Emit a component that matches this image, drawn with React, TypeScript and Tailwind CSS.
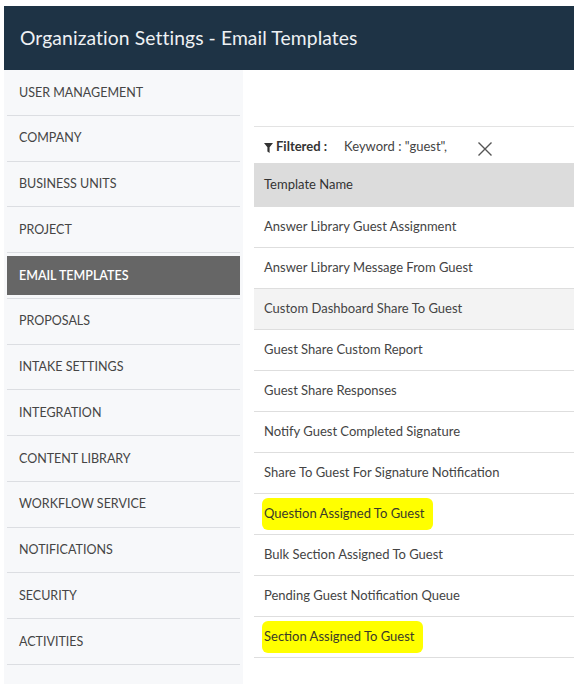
import React from 'react';

const menu = [
  'USER MANAGEMENT',
  'COMPANY',
  'BUSINESS UNITS',
  'PROJECT',
  'EMAIL TEMPLATES',
  'PROPOSALS',
  'INTAKE SETTINGS',
  'INTEGRATION',
  'CONTENT LIBRARY',
  'WORKFLOW SERVICE',
  'NOTIFICATIONS',
  'SECURITY',
  'ACTIVITIES',
];

const rows = [
  { name: 'Answer Library Guest Assignment' },
  { name: 'Answer Library Message From Guest' },
  { name: 'Custom Dashboard Share To Guest', hover: true },
  { name: 'Guest Share Custom Report' },
  { name: 'Guest Share Responses' },
  { name: 'Notify Guest Completed Signature' },
  { name: 'Share To Guest For Signature Notification' },
  { name: 'Question Assigned To Guest', marked: true },
  { name: 'Bulk Section Assigned To Guest' },
  { name: 'Pending Guest Notification Queue' },
  { name: 'Section Assigned To Guest', marked: true },
];

export default function App() {
  return (
    <div className="min-h-[684px] bg-white pt-[6px] pl-[4px] font-['Lato','Liberation_Sans',sans-serif] text-[#444]">
      {/* header */}
      <div className="h-[64px] bg-[#1e3345] flex items-center pl-[16px]">
        <h1 className="text-[19.3px] text-[#eef1f4] tracking-[0.1px]">Organization Settings - Email Templates</h1>
      </div>

      <div className="flex">
        {/* side menu */}
        <div className="w-[239px] h-[614px] bg-[#f7f8fa] px-[3px]">
          {menu.map((m) => (
            <div key={m} className="h-[45.75px] border-b border-[#dcdee2] py-[3px]">
              <div
                className={
                  'h-full flex items-center pl-[12px] pt-[1px] text-[12.5px] ' +
                  (m === 'EMAIL TEMPLATES' ? 'bg-[#666666] text-white font-semibold' : 'text-[#454545]')
                }
              >
                {m}
              </div>
            </div>
          ))}
        </div>

        {/* content */}
        <div className="flex-1 pl-[11px]">
          <div className="h-[57px] border-b border-[#e3e3e3]" />
          <div className="h-[36px] flex items-center pl-[10px] pt-[4px] text-[13px]">
            <svg width="9" height="10" viewBox="0 0 9 10" className="mr-[3px] mt-[1px]">
              <path d="M0 0h9L5.6 4.2V10L3.4 8.6V4.2z" fill="#333" />
            </svg>
            <span className="font-bold text-[#333]">Filtered :</span>
            <span className="ml-[17px] text-[#444]">Keyword : "guest",</span>
            <svg width="16" height="16" viewBox="0 0 16 16" className="ml-[30px] mt-[3px]">
              <path d="M1.5 1.5l13 13M14.5 1.5l-13 13" stroke="#555" strokeWidth="1.4" />
            </svg>
          </div>
          <div className="h-[44px] bg-[#dcdcdc] flex items-center pl-[10px] text-[13px] text-[#333]">Template Name</div>
          {rows.map((r) => (
            <div
              key={r.name}
              className={'h-[41px] border-b border-[#dedede] flex items-center pl-[10px] text-[13px] ' + (r.hover ? 'bg-[#f3f3f3]' : '')}
            >
              {r.marked ? (
                <span className="bg-[#ffff00] -ml-[2px] pl-[2px] pr-[9px] py-[6px] rounded-[6px] text-[#3a3a2a]">{r.name}</span>
              ) : (
                <span>{r.name}</span>
              )}
            </div>
          ))}
        </div>
      </div>
    </div>
  );
}
